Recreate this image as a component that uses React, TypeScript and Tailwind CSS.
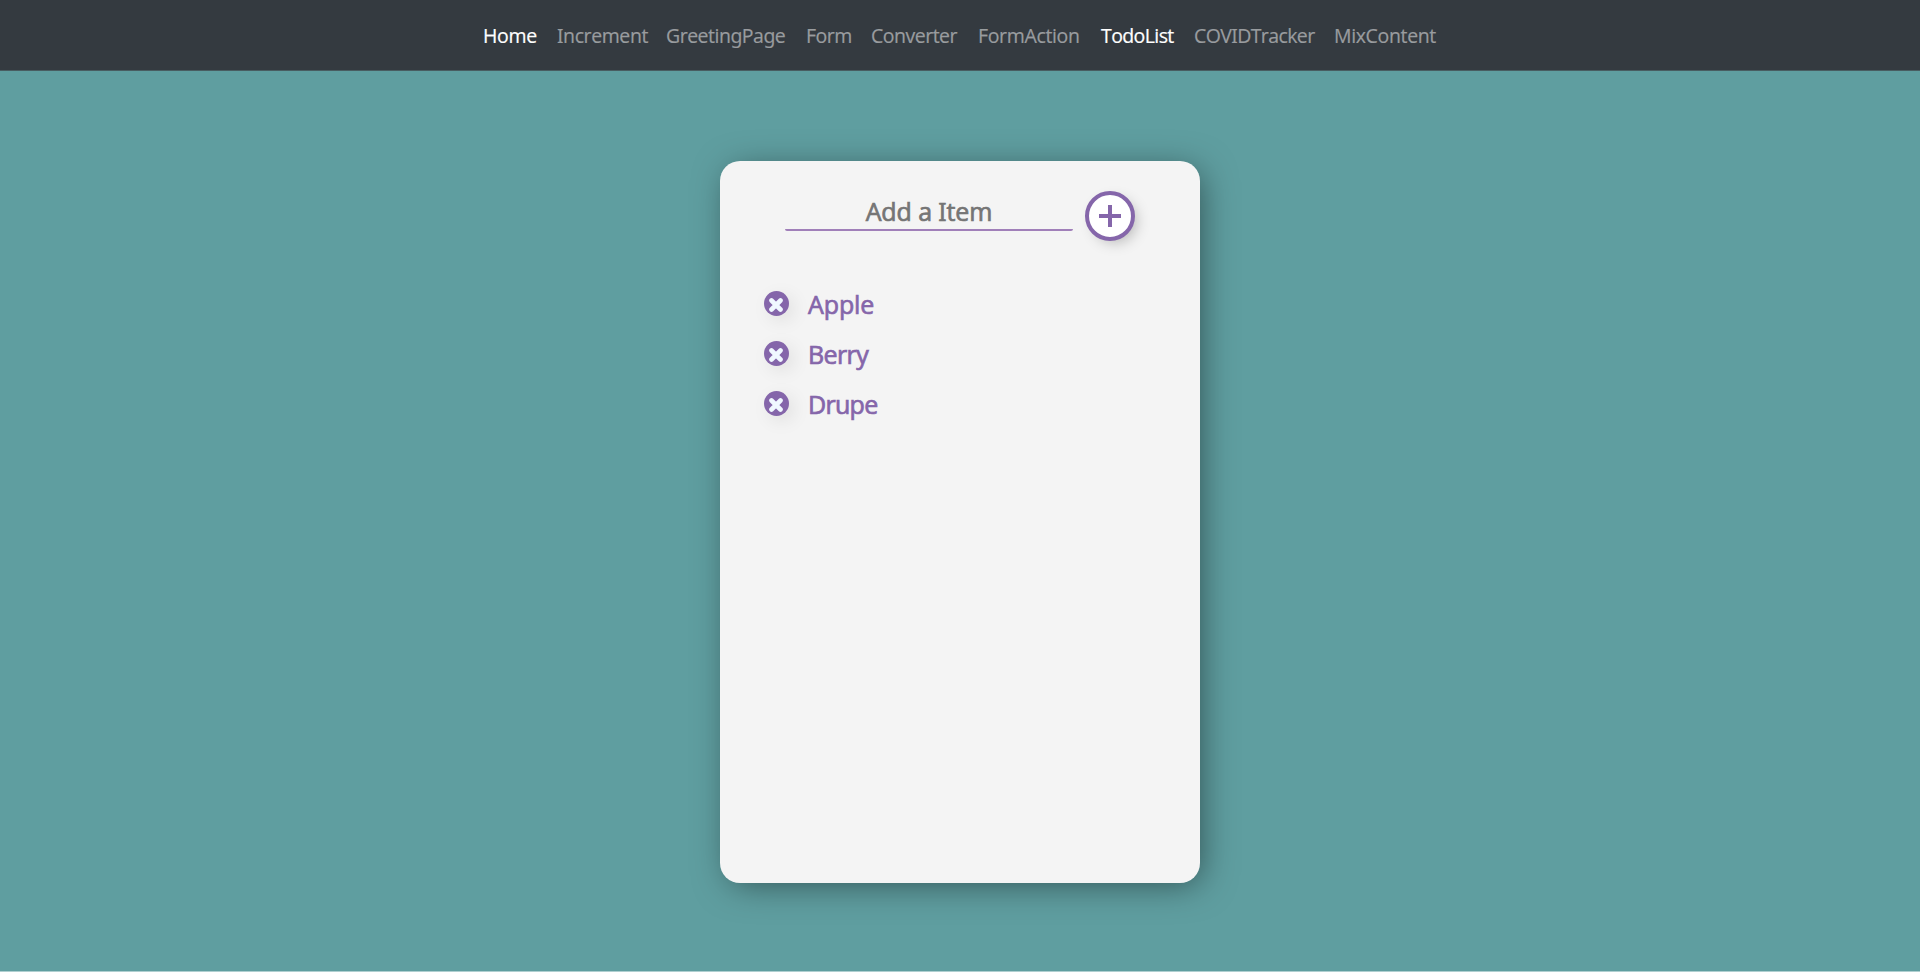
import React from 'react';

const links = [
  { label: 'Home', active: true, box: 'w-[54px] tracking-[-0.3px]' },
  { label: 'Increment', active: false, box: 'w-[89px] tracking-[-0.4px]' },
  { label: 'GreetingPage', active: false, box: 'w-[120px] tracking-[-0.5px]' },
  { label: 'Form', active: false, box: 'w-[45px] tracking-[-0.5px]' },
  { label: 'Converter', active: false, box: 'w-[87px] tracking-[-0.5px]' },
  { label: 'FormAction', active: false, box: 'w-[103px] tracking-[-0.35px]' },
  { label: 'TodoList', active: true, box: 'w-[73px] tracking-[-0.6px]' },
  { label: 'COVIDTracker', active: false, box: 'w-[120px] tracking-[-0.6px]' },
  { label: 'MixContent', active: false, box: 'w-[104px] tracking-[-0.35px]' },
];

const items = [
  { label: 'Apple', spacing: 'tracking-[-0.1px]' },
  { label: 'Berry', spacing: 'tracking-[-0.6px]' },
  { label: 'Drupe', spacing: 'tracking-[-0.7px]' },
];

export default function App() {
  return (
    <div className="flex h-screen flex-col bg-[#5f9ea0] font-['Open_Sans',sans-serif] [font-feature-settings:'ss01','ss02','ss03','salt']">
      <nav className="flex h-[71px] shrink-0 justify-center gap-5 border-b border-[#485d61] bg-[#343a40] pt-[21px] pl-px text-[19.5px] leading-[30px] [-webkit-text-stroke:0.2px]">
        {links.map((l) => (
          <a
            key={l.label}
            className={`block whitespace-nowrap ${l.box} ${l.active ? 'text-white' : 'text-[#999c9f]'}`}
          >
            {l.label}
          </a>
        ))}
      </nav>
      <main className="flex grow justify-center border-b border-[#afcfd0] pt-[90px]">
        <section className="h-[722px] w-[480px] rounded-[20px] bg-[#f4f4f4] pt-[30px] shadow-[5px_5px_35px_-5px_rgba(0,0,0,0.5)]">
          <div className="flex pl-[65px]">
            <input
              placeholder="Add a Item"
              className="h-10 w-[288px] rounded-[2px] border-b-2 border-[#a07fb9] bg-transparent pt-px text-center text-[25px] tracking-[-0.1px] outline-none [-webkit-text-stroke:0.7px] placeholder:text-[#757575]"
            />
            <button className="ml-3 flex size-[50px] items-center justify-center rounded-full border-4 border-[#8566aa] bg-white shadow-[5px_5px_15px_-5px_rgba(0,0,0,0.3)]">
              <svg viewBox="0 0 22 22" className="size-[22px]">
                <path d="M11 0v22M0 11h22" stroke="#8566aa" strokeWidth="4" />
              </svg>
            </button>
          </div>
          <ul className="mt-[38px] pl-11">
            {items.map((item) => (
              <li key={item.label} className="flex h-[50px] items-start pt-3">
                <button className="flex size-[25px] items-center justify-center rounded-full bg-[#8566aa] shadow-[5px_5px_20px_-3px_rgba(0,0,0,0.15)]">
                  <svg viewBox="0 0 14 14" className="mt-0.5 mr-px size-[14px]">
                    <path d="M2.5 2.5l9 9M11.5 2.5l-9 9" stroke="#f0f8ff" strokeWidth="4.6" strokeLinecap="round" />
                  </svg>
                </button>
                <span
                  className={`ml-[19px] text-[25px] leading-[27px] text-[#8566aa] [-webkit-text-stroke:0.7px] ${item.spacing}`}
                >
                  {item.label}
                </span>
              </li>
            ))}
          </ul>
        </section>
      </main>
    </div>
  );
}
